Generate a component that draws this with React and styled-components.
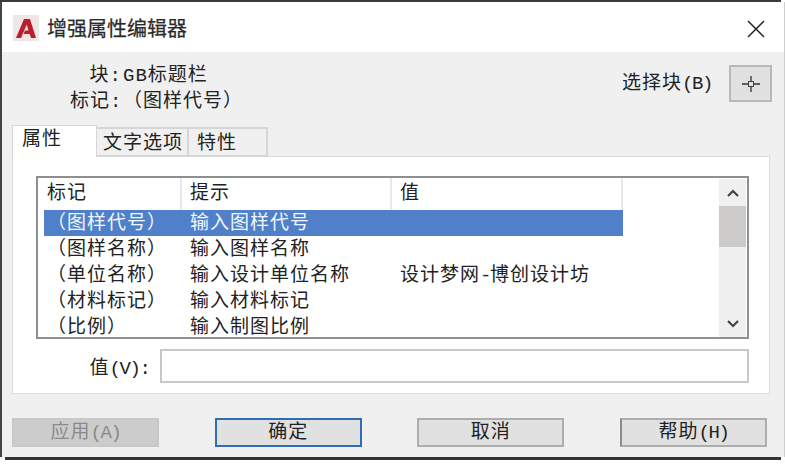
import React from "react";
import styled, { createGlobalStyle } from "styled-components";

const Global = createGlobalStyle`
  html, body { margin: 0; padding: 0; background: #fff; }
  body {
    font-family: "Liberation Mono", "Noto Sans CJK SC", monospace;
    font-size: 19px;
    letter-spacing: 1px;
    color: #222;
  }
`;

const Frame = styled.div`
  width: 785px;
  height: 460px;
  display: flex;
  flex-direction: column;
  overflow: hidden;
`;
const TopEdge = styled.div`
  height: 2px;
  margin-right: 4px;
  background: #3a3a3a;
  flex: none;
`;
const BottomEdge = styled.div`
  height: 3px;
  margin: 0 4px 0 5px;
  background: #333;
  flex: none;
`;
const Window = styled.div`
  flex: 1;
  display: flex;
  flex-direction: column;
  border-left: 2px solid #444;
  border-right: 1px solid #cfcfcf;
  min-height: 0;
`;
const TitleBar = styled.div`
  height: 50px;
  flex: none;
  background: #fff;
  display: flex;
  align-items: center;
  padding: 0 19px 0 11px;
`;
const Logo = styled.svg`
  width: 26px;
  height: 26px;
  flex: none;
  margin-top: 2px;
`;
const Title = styled.div`
  flex: 1;
  margin-left: 8px;
  font-size: 20px;
  letter-spacing: 0;
  color: #2a2a2a;
  -webkit-text-stroke: 0.25px #2a2a2a;
`;
const CloseIcon = styled.svg`
  width: 18px;
  height: 18px;
  flex: none;
  margin-top: 3px;
`;
const Body = styled.div`
  flex: 1;
  background: #f0f0f0;
  display: flex;
  flex-direction: column;
  padding: 0 12px 0 10px;
  min-height: 0;
`;
const InfoRow = styled.div`
  height: 74px;
  flex: none;
  display: flex;
  justify-content: space-between;
`;
const InfoLines = styled.div`
  padding: 11px 0 0 58px;
  display: flex;
  flex-direction: column;
`;
const InfoLine = styled.div`
  display: flex;
  height: 26px;
  line-height: 26px;
  white-space: nowrap;
`;
const InfoKey = styled.span`
  width: 52px;
  text-align: right;
  flex: none;
`;
const InfoValue = styled.span`
  margin-left: 1px;
`;
const Latin = styled.span`
  letter-spacing: -1.4px;
`;
const Picker = styled.div`
  display: flex;
  align-items: flex-start;
  padding-top: 13px;
`;
const PickLabel = styled.span`
  line-height: 38px;
  margin-right: 17px;
  white-space: nowrap;
`;
const PickButton = styled.div`
  width: 43px;
  height: 37px;
  box-sizing: border-box;
  background: #e1e1e1;
  border: 2px solid #b8b8b8;
  display: flex;
  align-items: center;
  justify-content: center;
`;
const Tabs = styled.div`
  height: 31px;
  flex: none;
  display: flex;
  align-items: flex-end;
  position: relative;
  z-index: 1;
  margin-bottom: -1px;
`;
const Tab = styled.div`
  box-sizing: border-box;
  width: ${(p) => p.$w}px;
  height: ${(p) => (p.$active ? 32 : 30)}px;
  line-height: ${(p) => (p.$active ? 29 : 30)}px;
  padding-left: ${(p) => p.$pad}px;
  white-space: nowrap;
  background: ${(p) => (p.$active ? "#fff" : "#f0f0f0")};
  border: solid #d6d6d6;
  border-width: ${(p) => (p.$active ? "1px 1px 0 1px" : "2px 2px 2px 0")};
`;
const Panel = styled.div`
  height: 238px;
  width: 758px;
  flex: none;
  box-sizing: border-box;
  background: #fff;
  border: 1px solid #dcdcdc;
  padding: 19px 20px 0 23px;
  display: flex;
  flex-direction: column;
`;
const List = styled.div`
  height: 163px;
  box-sizing: border-box;
  border: 2px solid #8f8f8f;
  display: flex;
  background: #fff;
  flex: none;
`;
const ListMain = styled.div`
  flex: 1;
  min-width: 0;
  padding-left: 6px;
`;
const Header = styled.div`
  display: flex;
  height: 32px;
  width: 579px;
`;
const HeadCell = styled.div`
  box-sizing: border-box;
  width: ${(p) => p.$w}px;
  padding-left: ${(p) => p.$pad}px;
  line-height: 33px;
  border-right: 2px solid #e8e8e8;
`;
const Row = styled.div`
  display: flex;
  height: 26px;
  width: 579px;
  line-height: 28px;
  background: ${(p) => (p.$selected ? "#4f80c9" : "transparent")};
  color: ${(p) => (p.$selected ? "#f2f7ff" : "#222")};
`;
const Cell = styled.div`
  box-sizing: border-box;
  width: ${(p) => p.$w}px;
  padding-left: ${(p) => p.$pad}px;
  white-space: nowrap;
`;
const Scrollbar = styled.div`
  width: 27px;
  margin: 1px 1px 0 0;
  flex: none;
  background: #f0f0f0;
  display: flex;
  flex-direction: column;
`;
const ScrollArrow = styled.div`
  height: 27px;
  flex: none;
  display: flex;
  align-items: center;
  justify-content: center;
`;
const ScrollThumb = styled.div`
  height: 41px;
  flex: none;
  background: #cdcbc9;
`;
const ScrollTrack = styled.div`
  flex: 1;
`;
const ValueRow = styled.div`
  display: flex;
  align-items: center;
  margin-top: 10px;
`;
const ValueLabel = styled.div`
  width: 124px;
  text-align: right;
  padding-right: 8px;
  box-sizing: border-box;
  flex: none;
  white-space: nowrap;
`;
const ValueInput = styled.div`
  width: 589px;
  height: 34px;
  box-sizing: border-box;
  background: #fff;
  border: 2px solid #c8c8c8;
  flex: none;
`;
const Footer = styled.div`
  display: flex;
  justify-content: space-between;
  width: 755px;
  padding-top: 24px;
  flex: none;
`;
const Button = styled.div`
  width: 147px;
  height: 29px;
  box-sizing: border-box;
  text-align: center;
  line-height: 27px;
  background: ${(p) => (p.$disabled ? "#cccccc" : "#e1e1e1")};
  color: ${(p) => (p.$disabled ? "#8a8a8a" : "#222")};
  border: 2px solid ${(p) =>
    p.$disabled ? "#c8c8c8" : p.$primary ? "#2f6db5" : "#adadad"};
  border-left-color: ${(p) =>
    p.$dark ? "#8c8c8c" : p.$disabled ? "#c8c8c8" : p.$primary ? "#2f6db5" : "#adadad"};
  white-space: nowrap;
`;

const L = "\uFF08";
const R = "\uFF09";
const rows = [
  [`${L}图样代号${R}`, "输入图样代号", "", true],
  [`${L}图样名称${R}`, "输入图样名称", ""],
  [`${L}单位名称${R}`, "输入设计单位名称", <>设计梦网<Latin>-</Latin>博创设计坊</>],
  [`${L}材料标记${R}`, "输入材料标记", ""],
  [`${L}比例${R}`, "输入制图比例", ""],
];

export default function App() {
  return (
    <>
      <Global />
      <Frame>
        <TopEdge />
        <Window>
          <TitleBar>
            <Logo viewBox="0 0 26 26">
              <rect width="26" height="26" fill="#f1e6e6" />
              <path d="M3 23 L11 4 H17 L23 23 H18 L16.6 19 H10.6 L12 15.5 H15.4 L13.8 9.5 L8 23 Z" fill="#b8202c" />
            </Logo>
            <Title>增强属性编辑器</Title>
            <CloseIcon viewBox="0 0 18 18">
              <path d="M1 1 L17 17 M17 1 L1 17" stroke="#222" strokeWidth="1.5" fill="none" />
            </CloseIcon>
          </TitleBar>
          <Body>
            <InfoRow>
              <InfoLines>
                <InfoLine>
                  <InfoKey>块:</InfoKey>
                  <InfoValue>GB标题栏</InfoValue>
                </InfoLine>
                <InfoLine>
                  <InfoKey>标记:</InfoKey>
                  <InfoValue>{`${L}图样代号${R}`}</InfoValue>
                </InfoLine>
              </InfoLines>
              <Picker>
                <PickLabel>选择块<Latin>(B)</Latin></PickLabel>
                <PickButton>
                  <svg width="20" height="18" viewBox="0 0 20 18">
                    <path d="M10 1 V6.5 M10 11.5 V17 M1 9 H7.5 M12.5 9 H19" stroke="#333" strokeWidth="1.3" />
                    <rect x="7.5" y="6.5" width="5" height="5" fill="none" stroke="#444" strokeWidth="1" />
                  </svg>
                </PickButton>
              </Picker>
            </InfoRow>
            <Tabs>
              <Tab $active $w={85} $pad={9}>属性</Tab>
              <Tab $w={92} $pad={6}>文字选项</Tab>
              <Tab $w={79} $pad={8}>特性</Tab>
            </Tabs>
            <Panel>
              <List>
                <ListMain>
                  <Header>
                    <HeadCell $w={138} $pad={3}>标记</HeadCell>
                    <HeadCell $w={210} $pad={8}>提示</HeadCell>
                    <HeadCell $w={231} $pad={8}>值</HeadCell>
                  </Header>
                  {rows.map(([a, b, c, sel]) => (
                    <Row key={a} $selected={sel}>
                      <Cell $w={138} $pad={3}>{a}</Cell>
                      <Cell $w={210} $pad={8}>{b}</Cell>
                      <Cell $w={231} $pad={8}>{c}</Cell>
                    </Row>
                  ))}
                </ListMain>
                <Scrollbar>
                  <ScrollArrow>
                    <svg width="14" height="10" viewBox="0 0 14 10">
                      <path d="M2 8 L7 3 L12 8" stroke="#444" strokeWidth="2.2" fill="none" />
                    </svg>
                  </ScrollArrow>
                  <ScrollThumb />
                  <ScrollTrack />
                  <ScrollArrow>
                    <svg width="14" height="10" viewBox="0 0 14 10">
                      <path d="M2 2 L7 7 L12 2" stroke="#444" strokeWidth="2.2" fill="none" />
                    </svg>
                  </ScrollArrow>
                </Scrollbar>
              </List>
              <ValueRow>
                <ValueLabel>值<Latin>(V)</Latin>:</ValueLabel>
                <ValueInput />
              </ValueRow>
            </Panel>
            <Footer>
              <Button $disabled>应用<Latin>(A)</Latin></Button>
              <Button $primary>确定</Button>
              <Button>取消</Button>
              <Button $dark>帮助<Latin>(H)</Latin></Button>
            </Footer>
          </Body>
        </Window>
        <BottomEdge />
      </Frame>
    </>
  );
}
